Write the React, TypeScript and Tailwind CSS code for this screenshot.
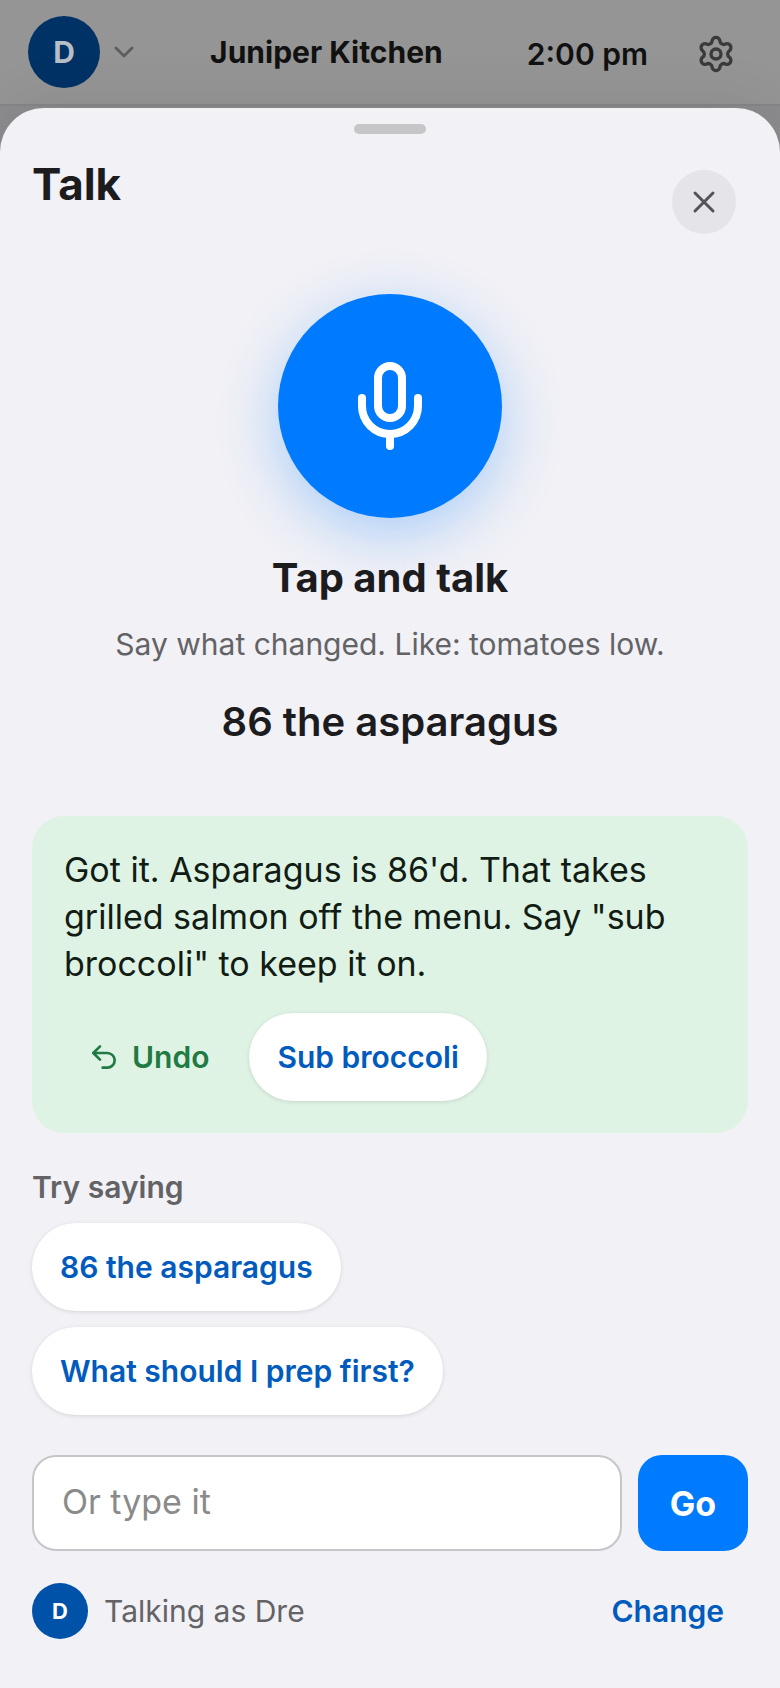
import { useState } from "react";
import { ChevronDown, Mic, Settings, Undo2, X } from "lucide-react";
import clsx from "clsx";

const SUGGESTIONS = ["86 the asparagus", "What should I prep first?"];

function Avatar({ initial, className }: { initial: string; className?: string }) {
  return <span className={clsx("flex shrink-0 items-center justify-center rounded-full font-bold", className)}>{initial}</span>;
}

function Chip({ label, onClick }: { label: string; onClick?: () => void }) {
  return (
    <button
      type="button"
      onClick={onClick}
      className="h-22 rounded-full bg-white px-7 text-[30px] leading-10 font-semibold text-[#005bbd] shadow-[0_1px_4px_rgba(0,0,0,0.12)]"
    >
      {label}
    </button>
  );
}

function TopBar() {
  return (
    <header className="flex h-[106px] items-center border-b-2 border-[#868688] bg-[#959595] pr-5 pl-7 text-[#111112]">
      <button type="button" className="flex items-center gap-2" aria-label="Switch person">
        <Avatar initial="D" className="h-18 w-18 bg-[#003266] text-[30px] text-[#b8bec6]" />
        <ChevronDown className="h-8 w-8 text-[#5c5c5e]" />
      </button>
      <h1 className="flex-1 text-center text-[30px] leading-10 font-bold">Juniper Kitchen</h1>
      <div className="flex items-center pt-1">
        <time className="pr-6 pl-3.5 text-[30px] leading-10 font-semibold">2:00 pm</time>
        <button type="button" className="flex h-22 w-22 items-center justify-center text-[#3a3a3c]" aria-label="Settings">
          <Settings className="h-10 w-10" />
        </button>
      </div>
    </header>
  );
}

function Reply({ text, onUndo, onSub }: { text: string; onUndo?: () => void; onSub?: () => void }) {
  return (
    <section className="mt-[70px] rounded-[32px] bg-[#dff3e4] px-8 pt-[30px] pb-8">
      <p className="text-[34px] leading-[47px] text-[#111c14]">{text}</p>
      <div className="mt-[26px] flex items-center gap-4">
        <button type="button" onClick={onUndo} className="flex h-22 items-center gap-3 px-6 text-[30px] font-semibold text-[#1f7a43]">
          <Undo2 className="h-8 w-8" />
          Undo
        </button>
        <Chip label="Sub broccoli" onClick={onSub} />
      </div>
    </section>
  );
}

export default function App() {
  const [draft, setDraft] = useState("");
  const [heard, setHeard] = useState("86 the asparagus");

  function submit(e: React.FormEvent) {
    e.preventDefault();
    if (!draft.trim()) return;
    setHeard(draft.trim());
    setDraft("");
  }

  return (
    <div className="flex min-h-screen flex-col bg-[#8c8c8f] font-[Inter,sans-serif]">
      <TopBar />

      <main className="mt-0.5 flex flex-1 flex-col rounded-t-[44px] bg-[#f1f1f6] px-8 pb-12 text-[#1c1c1e] shadow-[0_-4px_60px_rgba(0,0,0,0.08)]">
        <div className="mx-auto mt-4 h-2.5 w-18 rounded-full bg-[#c6c6c9]" />

        <div className="mt-[26px] flex items-start justify-between pr-3">
          <h2 className="text-[44px] leading-12 font-bold">Talk</h2>
          <button
            type="button"
            className="mt-2.5 flex h-16 w-16 items-center justify-center rounded-full bg-[#e4e4e9] text-[#545457]"
            aria-label="Close"
          >
            <X className="h-9 w-9" />
          </button>
        </div>

        <div className="mt-15 flex flex-col items-center text-center">
          <button
            type="button"
            className="flex h-56 w-56 items-center justify-center rounded-full bg-[#007aff] text-white shadow-[0_16px_60px_rgba(0,122,255,0.3)]"
            aria-label="Tap and talk"
          >
            <Mic className="h-24 w-24" />
          </button>
          <p className="mt-9 text-[40px] leading-12 font-bold">Tap and talk</p>
          <p className="mt-[22px] text-[30px] leading-10 text-[#636366]">Say what changed. Like: tomatoes low.</p>
          <p className="mt-[34px] text-[40px] leading-12 font-semibold">{heard}</p>
        </div>

        <Reply text={`Got it. Asparagus is 86'd. That takes grilled salmon off the menu. Say "sub broccoli" to keep it on.`} />

        <h3 className="mt-[34px] text-[30px] leading-10 font-semibold text-[#636366]">Try saying</h3>
        <div className="mt-4 flex flex-col items-start gap-4">
          {SUGGESTIONS.map((s) => (
            <Chip key={s} label={s} onClick={() => setHeard(s)} />
          ))}
        </div>

        <form onSubmit={submit} className="mt-10 flex gap-4">
          <input
            type="text"
            value={draft}
            onChange={(e) => setDraft(e.target.value)}
            placeholder="Or type it"
            aria-label="Or type it"
            className="h-24 min-w-0 flex-1 rounded-3xl border-2 border-[#c6c6c8] bg-white px-7 pb-1 text-[34px] outline-none placeholder:text-[#8a8a8a]"
          />
          <button type="submit" className="h-24 rounded-3xl bg-[#007aff] px-8 text-[34px] font-bold text-white">
            Go
          </button>
        </form>

        <div className="mt-8 flex items-center">
          <Avatar initial="D" className="h-14 w-14 bg-[#0051a8] text-[22px] text-white" />
          <span className="ml-4 text-[30px] leading-10 text-[#636366]">Talking as Dre</span>
          <button type="button" className="ml-auto px-6 text-[30px] leading-10 font-semibold text-[#005bbd]">
            Change
          </button>
        </div>
      </main>
    </div>
  );
}
